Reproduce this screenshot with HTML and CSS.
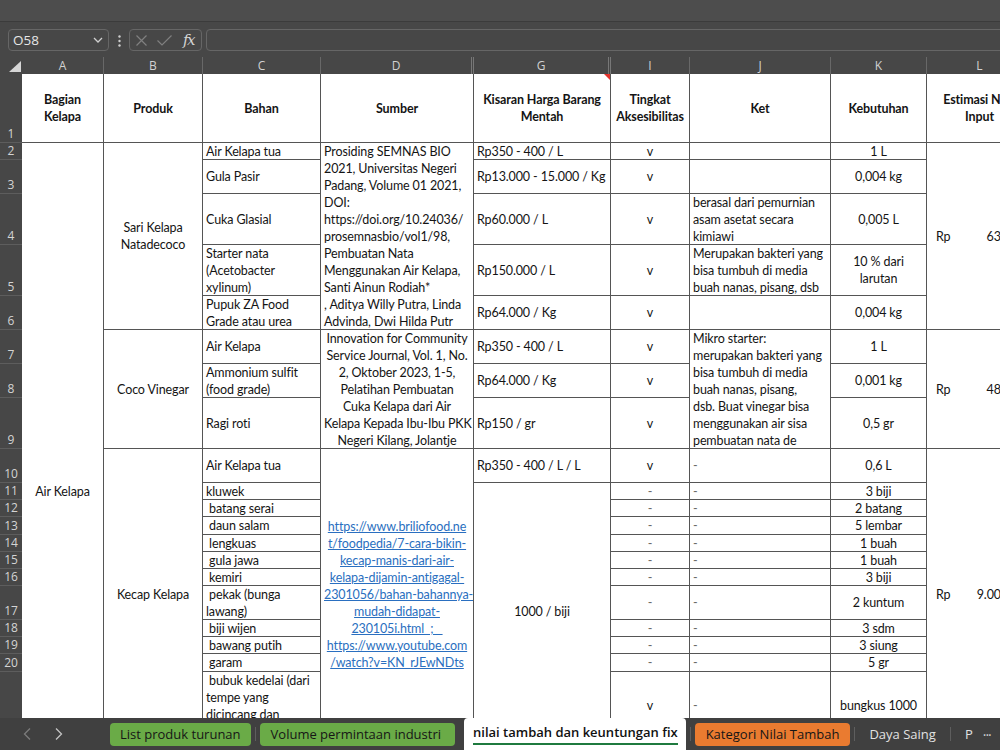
FILE: index.html
```html
<!DOCTYPE html>
<html lang="id">
<head>
    <meta charset="UTF-8">
    <meta name="viewport" content="width=device-width, initial-scale=1.0">
    <title>nilai tambah dan keuntungan fix</title>
    <link rel="stylesheet" href="styles.css">
</head>
<body>
    <div class="titlebar"></div>

    <div class="formula-bar">
        <div class="name-box">
            <span>O58</span>
            <svg width="10" height="6" viewBox="0 0 10 6"><polyline points="1,1 5,5 9,1" fill="none" stroke="#d0d0d0" stroke-width="1.3"/></svg>
        </div>
        <svg class="more" width="3" height="12" viewBox="0 0 3 12"><circle cx="1.5" cy="1.5" r="1.2" fill="#cfcfcf"/><circle cx="1.5" cy="6" r="1.2" fill="#cfcfcf"/><circle cx="1.5" cy="10.5" r="1.2" fill="#cfcfcf"/></svg>
        <div class="fx-box">
            <svg class="cancel" width="11" height="11" viewBox="0 0 11 11"><path d="M0.5 0.5 L10.5 10.5 M10.5 0.5 L0.5 10.5" stroke="#808080" stroke-width="1.2"/></svg>
            <svg class="enter" width="15" height="11" viewBox="0 0 15 11"><polyline points="0.5,5.5 5,10 14.5,0.5" fill="none" stroke="#808080" stroke-width="1.2"/></svg>
            <span class="fx">fx</span>
        </div>
        <div class="formula-input"></div>
    </div>

    <div class="sheet">
        <div class="grid">
            <!-- column headers -->
            <div class="corner"><svg width="12" height="11" viewBox="0 0 12 11"><polygon points="12,0 12,11 0,11" fill="#d6d6d6"/></svg></div>
            <div class="ch">A</div>
            <div class="ch">B</div>
            <div class="ch">C</div>
            <div class="ch hid">D</div>
            <div class="ch hid">G</div>
            <div class="ch">I</div>
            <div class="ch">J</div>
            <div class="ch">K</div>
            <div class="ch">L</div>

            <!-- row 1 -->
            <div class="rh">1</div>
            <div class="cell hd">Bagian<br>Kelapa</div>
            <div class="cell hd">Produk</div>
            <div class="cell hd">Bahan</div>
            <div class="cell hd">Sumber</div>
            <div class="cell hd note">Kisaran Harga Barang<br>Mentah</div>
            <div class="cell hd">Tingkat<br>Aksesibilitas</div>
            <div class="cell hd">Ket</div>
            <div class="cell hd">Kebutuhan</div>
            <div class="cell hd">Estimasi Nilai<br>Input</div>

            <!-- row 2 -->
            <div class="rh">2</div>
            <div class="cell ctr span21">Air Kelapa</div>
            <div class="cell ctr span5">Sari Kelapa<br>Natadecoco</div>
            <div class="cell">Air Kelapa tua</div>
            <div class="cell top span5">Prosiding SEMNAS BIO<br>2021, Universitas Negeri<br>Padang, Volume 01 2021,<br>DOI:<br>https://doi.org/10.24036/<br>prosemnasbio/vol1/98,<br>Pembuatan Nata<br>Menggunakan Air Kelapa,<br>Santi Ainun Rodiah*<br>, Aditya Willy Putra, Linda<br>Advinda, Dwi Hilda Putr</div>
            <div class="cell">Rp350 - 400 / L</div>
            <div class="cell ctr">v</div>
            <div class="cell"></div>
            <div class="cell ctr">1 L</div>
            <div class="cell acct span5"><span>Rp</span><span>63.750</span></div>

            <!-- row 3 -->
            <div class="rh">3</div>
            <div class="cell">Gula Pasir</div>
            <div class="cell">Rp13.000 - 15.000 / Kg</div>
            <div class="cell ctr">v</div>
            <div class="cell"></div>
            <div class="cell ctr">0,004 kg</div>

            <!-- row 4 -->
            <div class="rh">4</div>
            <div class="cell">Cuka Glasial</div>
            <div class="cell">Rp60.000 / L</div>
            <div class="cell ctr">v</div>
            <div class="cell">berasal dari pemurnian<br>asam asetat secara<br>kimiawi</div>
            <div class="cell ctr">0,005 L</div>

            <!-- row 5 -->
            <div class="rh">5</div>
            <div class="cell">Starter nata<br>(Acetobacter<br>xylinum)</div>
            <div class="cell">Rp150.000 / L</div>
            <div class="cell ctr">v</div>
            <div class="cell">Merupakan bakteri yang<br>bisa tumbuh di media<br>buah nanas, pisang, dsb</div>
            <div class="cell ctr">10 % dari<br>larutan</div>

            <!-- row 6 -->
            <div class="rh">6</div>
            <div class="cell">Pupuk ZA Food<br>Grade atau urea</div>
            <div class="cell">Rp64.000 / Kg</div>
            <div class="cell ctr">v</div>
            <div class="cell"></div>
            <div class="cell ctr">0,004 kg</div>

            <!-- row 7 -->
            <div class="rh">7</div>
            <div class="cell ctr span3">Coco Vinegar</div>
            <div class="cell">Air Kelapa</div>
            <div class="cell ctr span3">Innovation for Community<br>Service Journal, Vol. 1, No.<br>2, Oktober 2023, 1-5,<br>Pelatihan Pembuatan<br>Cuka Kelapa dari Air<br>Kelapa Kepada Ibu-Ibu PKK<br>Negeri Kilang, Jolantje</div>
            <div class="cell">Rp350 - 400 / L</div>
            <div class="cell ctr">v</div>
            <div class="cell top span3">Mikro starter:<br>merupakan bakteri yang<br>bisa tumbuh di media<br>buah nanas, pisang,<br>dsb. Buat vinegar bisa<br>menggunakan air sisa<br>pembuatan nata de</div>
            <div class="cell ctr">1 L</div>
            <div class="cell acct span3"><span>Rp</span><span>48.600</span></div>

            <!-- row 8 -->
            <div class="rh">8</div>
            <div class="cell">Ammonium sulfit<br>(food grade)</div>
            <div class="cell">Rp64.000 / Kg</div>
            <div class="cell ctr">v</div>
            <div class="cell ctr">0,001 kg</div>

            <!-- row 9 -->
            <div class="rh">9</div>
            <div class="cell">Ragi roti</div>
            <div class="cell">Rp150 / gr</div>
            <div class="cell ctr">v</div>
            <div class="cell ctr">0,5 gr</div>

            <!-- row 10 -->
            <div class="rh">10</div>
            <div class="cell ctr span12">Kecap Kelapa</div>
            <div class="cell">Air Kelapa tua</div>
            <div class="cell ctr link span12"><span>https://www.briliofood.ne<br>t/foodpedia/7-cara-bikin-<br>kecap-manis-dari-air-<br>kelapa-dijamin-antigagal-<br>2301056/bahan-bahannya-<br>mudah-didapat-<br>230105i.html&nbsp;&nbsp;;&nbsp;&nbsp;&nbsp;<br>https://www.youtube.com<br>/watch?v=KN_rJEwNDts</span></div>
            <div class="cell">Rp350 - 400 / L / L</div>
            <div class="cell ctr">v</div>
            <div class="cell dash">-</div>
            <div class="cell ctr">0,6 L</div>
            <div class="cell acct span12"><span>Rp</span><span>9.000,00</span></div>

            <!-- row 11 -->
            <div class="rh">11</div>
            <div class="cell">kluwek</div>
            <div class="cell ctr span11">1000 / biji</div>
            <div class="cell ctr dash">-</div>
            <div class="cell dash">-</div>
            <div class="cell ctr">3 biji</div>

            <div class="rh">12</div>
            <div class="cell">&nbsp;batang serai</div>
            <div class="cell ctr dash">-</div>
            <div class="cell dash">-</div>
            <div class="cell ctr">2 batang</div>

            <div class="rh">13</div>
            <div class="cell">&nbsp;daun salam</div>
            <div class="cell ctr dash">-</div>
            <div class="cell dash">-</div>
            <div class="cell ctr">5 lembar</div>

            <div class="rh">14</div>
            <div class="cell">&nbsp;lengkuas</div>
            <div class="cell ctr dash">-</div>
            <div class="cell dash">-</div>
            <div class="cell ctr">1 buah</div>

            <div class="rh">15</div>
            <div class="cell">&nbsp;gula jawa</div>
            <div class="cell ctr dash">-</div>
            <div class="cell dash">-</div>
            <div class="cell ctr">1 buah</div>

            <div class="rh">16</div>
            <div class="cell">&nbsp;kemiri</div>
            <div class="cell ctr dash">-</div>
            <div class="cell dash">-</div>
            <div class="cell ctr">3 biji</div>

            <div class="rh">17</div>
            <div class="cell">&nbsp;pekak (bunga<br>lawang)</div>
            <div class="cell ctr dash">-</div>
            <div class="cell dash">-</div>
            <div class="cell ctr">2 kuntum</div>

            <div class="rh">18</div>
            <div class="cell">&nbsp;biji wijen</div>
            <div class="cell ctr dash">-</div>
            <div class="cell dash">-</div>
            <div class="cell ctr">3 sdm</div>

            <div class="rh">19</div>
            <div class="cell">&nbsp;bawang putih</div>
            <div class="cell ctr dash">-</div>
            <div class="cell dash">-</div>
            <div class="cell ctr">3 siung</div>

            <div class="rh">20</div>
            <div class="cell">&nbsp;garam</div>
            <div class="cell ctr dash">-</div>
            <div class="cell dash">-</div>
            <div class="cell ctr">5 gr</div>

            <div class="rh">21</div>
            <div class="cell top">&nbsp;bubuk kedelai (dari<br>tempe yang<br>dicincang dan</div>
            <div class="cell ctr">v</div>
            <div class="cell dash">-</div>
            <div class="cell ctr">bungkus 1000</div>

            <div class="rh">22</div>
            <div class="cell"></div>
            <div class="cell"></div>
            <div class="cell"></div>
            <div class="cell"></div>
            <div class="cell"></div>
            <div class="cell"></div>
            <div class="cell"></div>
            <div class="cell"></div>
        </div>
    </div>

    <div class="tabs">
        <div class="tab-nav">
            <svg width="8" height="12" viewBox="0 0 8 12"><polyline points="7,0.5 1.5,6 7,11.5" fill="none" stroke="#7c7c7c" stroke-width="1.3"/></svg>
            <svg width="8" height="12" viewBox="0 0 8 12"><polyline points="1,0.5 6.5,6 1,11.5" fill="none" stroke="#c4c4c4" stroke-width="1.3"/></svg>
        </div>
        <div class="tab green">List produk turunan</div>
        <div class="sep"></div>
        <div class="tab green wide">Volume permintaan industri</div>
        <div class="tab active"><span>nilai tambah dan keuntungan fix</span></div>
        <div class="sep"></div>
        <div class="tab orange">Kategori Nilai Tambah</div>
        <div class="sep"></div>
        <div class="tab plain">Daya Saing</div>
        <div class="sep"></div>
        <div class="tab plain">P</div>
        <div class="tab-more">&middot;&middot;&middot;</div>
    </div>
</body>
</html>
```

FILE: styles.css
```css
body {
    margin: 0;
    padding: 0;
    width: 1000px;
    height: 750px;
    overflow: hidden;
    background-color: #474747;
    font-family: Lato, "Open Sans", sans-serif;
}
.titlebar {
    height: 21px;
    background-color: #4d4d4d;
    border-bottom: 1px solid #3b3b3b;
}
.formula-bar {
    display: flex;
    align-items: flex-start;
    height: 35px;
    padding: 7px 0 0 8px;
    box-sizing: border-box;
    background-color: #474747;
}
.name-box {
    display: flex;
    align-items: center;
    justify-content: space-between;
    width: 101px;
    height: 22px;
    padding: 0 5px 0 4px;
    box-sizing: border-box;
    border: 1px solid #666;
    border-radius: 4px;
    color: #e6e6e6;
    font-family: "Open Sans", sans-serif;
    font-size: 13.5px;
}
.more {
    margin: 6px 8px 0 9px;
}
.fx-box {
    display: flex;
    align-items: center;
    width: 73px;
    height: 22px;
    padding-left: 6px;
    box-sizing: border-box;
    border: 1px solid #666;
    border-radius: 4px;
}
.fx-box .enter {
    margin-left: 10px;
}
.fx {
    margin-left: 11px;
    color: #d4d4d4;
    font-family: "DejaVu Serif", serif;
    font-style: italic;
    font-size: 15px;
    letter-spacing: -1.5px;
}
.formula-input {
    flex-grow: 1;
    height: 22px;
    margin-left: 4px;
    margin-right: -10px;
    box-sizing: border-box;
    border: 1px solid #666;
    border-radius: 4px;
}

.sheet {
    height: 661px;
    overflow: hidden;
    background-color: #fff;
}
.grid {
    display: grid;
    grid-template-columns: 22px 82px 99px 118px 153px 137px 79px 141px 96px 106px;
    grid-template-rows: 17px 69px 17px 34px 51px 51px 34px 34px 34px 51px 34px 17px 17px 18px 17px 17px 17px 34px 17px 17px 18px 68px 101px;
    width: 1033px;
}
.corner {
    display: flex;
    align-items: flex-end;
    justify-content: flex-end;
    padding: 0 1px 2px 0;
    background-color: #474747;
}
.ch {
    background-color: #474747;
    border-right: 1px solid #686868;
    color: #d2d2d2;
    font-family: "Open Sans", sans-serif;
    font-size: 12px;
    line-height: 17px;
    text-align: center;
}
.ch.hid {
    border-right: 3px double #777;
}
.rh {
    display: flex;
    flex-direction: column;
    justify-content: flex-end;
    background-color: #474747;
    border-bottom: 1px solid #5d5d5d;
    color: #d4d4d4;
    font-family: "Open Sans", sans-serif;
    font-size: 12px;
    line-height: 16px;
    text-align: center;
}
.cell {
    display: flex;
    flex-direction: column;
    justify-content: center;
    padding: 0 3px;
    box-sizing: border-box;
    overflow: hidden;
    background-color: #fff;
    border-right: 1px solid #555;
    border-bottom: 1px solid #555;
    color: #141414;
    font-size: 12.5px;
    letter-spacing: -0.12px;
    line-height: 17px;
    white-space: nowrap;
}
.cell.ctr {
    text-align: center;
}
.cell.top {
    justify-content: flex-start;
}
.cell.hd {
    text-align: center;
    font-weight: 700;
}
.cell.dash {
    color: #6a6a6a;
}
.cell.link {
    color: #2a6fc0;
    text-decoration: underline;
}
.cell.acct {
    flex-direction: row;
    align-items: center;
    justify-content: space-between;
    padding: 0 7px 0 9px;
}
.cell.note {
    position: relative;
}
.cell.note::after {
    content: "";
    position: absolute;
    top: 0;
    right: 0;
    border-top: 6px solid #e3312b;
    border-left: 6px solid transparent;
}
.span21 { grid-row: span 21; }
.span12 { grid-row: span 12; }
.span11 { grid-row: span 11; }
.span5 { grid-row: span 5; }
.span3 { grid-row: span 3; }

.tabs {
    display: flex;
    align-items: center;
    height: 32px;
    background-color: #404040;
    font-family: "Open Sans", sans-serif;
    font-size: 13px;
    white-space: nowrap;
}
.tab-nav {
    display: flex;
    align-items: center;
    gap: 24px;
    width: 87px;
    padding-left: 23px;
}
.tab {
    height: 23px;
    line-height: 23px;
    padding: 0 10px;
    border-radius: 4px;
}
.tab.green {
    background-color: #6aab47;
    color: #161616;
}
.tab.green.wide {
    padding: 0 14px 0 11px;
}
.tab.orange {
    background-color: #ea7b30;
    color: #161616;
    padding: 0 11px 0 11px;
}
.tab.plain {
    color: #e2e2e2;
}
.tab.active {
    align-self: stretch;
    height: auto;
    line-height: 28px;
    margin-left: 9px;
    padding: 0 8px 0 9px;
    border-radius: 4px 4px 0 0;
    background-color: #fff;
    color: #111;
    font-weight: 600;
}
.tab.active span {
    padding-bottom: 2px;
    border-bottom: 2px solid #1f7a3f;
}
.sep {
    width: 1px;
    height: 14px;
    margin: 0 4px;
    background-color: #5e5e5e;
}
.tab-more {
    color: #d0d0d0;
    font-size: 14px;
    letter-spacing: -1px;
}
```
